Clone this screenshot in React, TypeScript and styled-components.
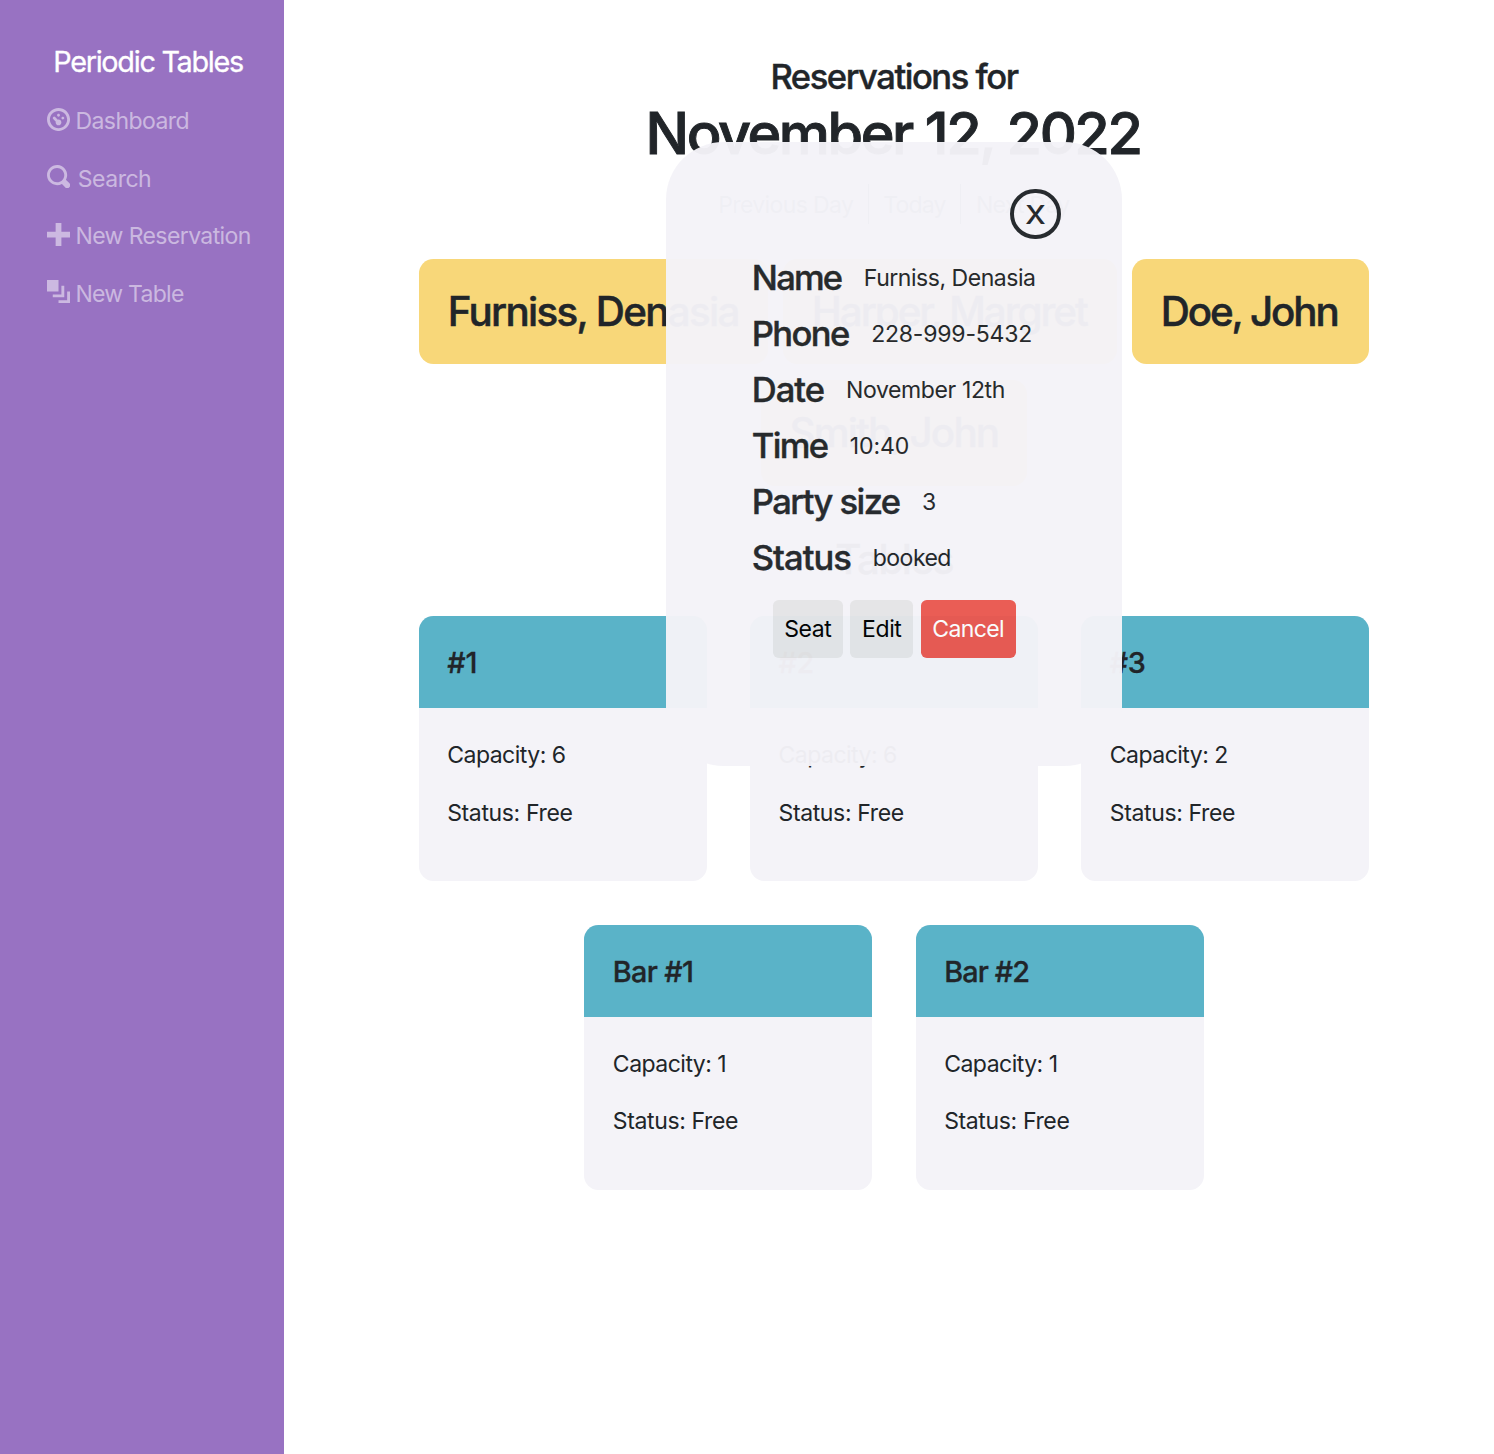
import React from "react";
import styled, { createGlobalStyle } from "styled-components";

const GlobalStyle = createGlobalStyle`
  *, *::before, *::after { box-sizing: border-box; }
  body {
    margin: 0;
    background: #fff;
    color: #212529;
    font-family: Inter, "Liberation Sans", sans-serif;
    font-size: 23.04px;
    line-height: 1.5;
    overflow: hidden;
  }
  h1, h2, h3, h4, p { margin: 0; }
`;

/* Inline text with its own tracking */
const Tracked = styled.span<{ $ls?: number }>`
  letter-spacing: ${(p) => p.$ls ?? 0}px;
  white-space: nowrap;
`;

const Shell = styled.div`
  display: flex;
  height: 1454px;
`;

const Sidebar = styled.nav`
  flex: 0 0 284px;
  padding: 40px 0 0 46.4px;
  background: #9872c2;
`;

const Brand = styled.div`
  padding-left: 6.8px;
  height: 52.4px;
  font-size: 28.8px;
  line-height: 43px;
  color: #fff;
  -webkit-text-stroke: 0.3px;
`;

const NavLink = styled.a`
  display: flex;
  align-items: center;
  height: 57.6px;
  color: rgba(255, 255, 255, 0.5);
`;

const NavIcon = styled.svg`
  width: 23.04px;
  height: 23.04px;
  margin: -4px -0.4px 0 0.4px;
  fill: currentColor;
`;

const NavText = styled(Tracked)<{ $gap: number }>`
  margin-left: ${(p) => p.$gap}px;
`;

const Main = styled.main`
  flex: 1;
  display: flex;
  flex-direction: column;
  align-items: center;
  padding: 56px 0 0 10px;
`;

const Title = styled.h2`
  font-size: 34.56px;
  font-weight: 500;
  line-height: 42px;
  -webkit-text-stroke: 0.4px;
`;

const DateTitle = styled.h1`
  padding-right: 2px;
  font-size: 57.6px;
  font-weight: 500;
  line-height: 70px;
  -webkit-text-stroke: 0.9px;
`;

const DayNav = styled.div`
  display: flex;
  height: 40px;
  margin: 16px 0 35px;
  line-height: 43px;
  color: #6c757d;
`;

const DayButton = styled.a<{ $w: number }>`
  width: ${(p) => p.$w}px;
  text-align: center;
  & + & { border-left: 1.44px solid #6c757d; }
`;

const Reservations = styled.section`
  display: flex;
  flex-wrap: wrap;
  justify-content: center;
  gap: 16px 15px;
  width: 980px;
`;

const Reservation = styled.div<{ $w: number }>`
  width: ${(p) => p.$w}px;
  height: 105.4px;
  padding-left: 28.5px;
  border-radius: 14.4px;
  background: #f8d779;
  font-size: 40.32px;
  font-weight: 500;
  line-height: 106.6px;
  -webkit-text-stroke: 0.5px;
`;

const SectionTitle = styled.h3`
  margin: 50.5px 0 32px;
  font-size: 40.32px;
  font-weight: 500;
  line-height: 48px;
  -webkit-text-stroke: 0.5px;
`;

const Tables = styled.section`
  display: flex;
  flex-wrap: wrap;
  justify-content: center;
  gap: 43.3px;
  width: 1000px;
`;

const TableCard = styled.article`
  width: 288px;
  height: 265px;
  border-radius: 14.4px;
  background: #f4f3f8;
  overflow: hidden;
`;

const TableHead = styled.h4`
  height: 92px;
  padding-left: 28.5px;
  background: #5ab3c8;
  font-size: 28.8px;
  font-weight: 500;
  line-height: 93px;
  -webkit-text-stroke: 0.3px;
`;

const TableBody = styled.div`
  display: flex;
  flex-direction: column;
  gap: 23px;
  padding: 30px 28.5px;
`;

const Dialog = styled.div`
  position: absolute;
  top: 142px;
  left: 666px;
  width: 456px;
  height: 623.6px;
  padding: 46.5px 61px 0 85.8px;
  border-radius: 57.6px;
  background: #f4f3f8;
  opacity: 0.97;
`;

const CloseButton = styled.button`
  display: flex;
  align-items: center;
  justify-content: center;
  width: 50.6px;
  height: 50.6px;
  margin-left: auto;
  padding: 0 0 5px;
  border: 4.3px solid #212529;
  border-radius: 50%;
  background: transparent;
  color: #212529;
  font: 400 35px/36px Inter, "Liberation Sans", sans-serif;
`;

const CloseGlyph = styled.span`
  transform: scaleX(1.12);
`;

const Field = styled.div<{ $gap: number }>`
  display: flex;
  align-items: baseline;
  gap: ${(p) => p.$gap}px;
  height: 56px;
`;

const Details = styled.div`
  padding-top: 18px;
`;

const Label = styled(Tracked)`
  font-size: 34.56px;
  font-weight: 500;
  line-height: 42px;
  -webkit-text-stroke: 0.4px;
`;

const Value = styled(Tracked)`
  position: relative;
  top: -4px;
`;

const Actions = styled.div`
  display: flex;
  gap: 7.2px;
  margin: 7px 0 0 21px;
`;

const Action = styled.button<{ $w: number; $danger?: boolean }>`
  width: ${(p) => p.$w}px;
  height: 57.6px;
  padding: 0;
  border: 0;
  border-radius: 5.76px;
  background: ${(p) => (p.$danger ? "#ea5850" : "#e5e5e7")};
  color: ${(p) => (p.$danger ? "#fff" : "#000")};
  font: 400 23.04px/59px Inter, "Liberation Sans", sans-serif;
`;

const links = [
  { text: "Dashboard", ls: -0.57, gap: 6, d: "M4 0c-2.2 0-4 1.8-4 4s1.8 4 4 4 4-1.8 4-4-1.8-4-4-4zm0 1c1.66 0 3 1.34 3 3s-1.34 3-3 3-3-1.34-3-3 1.34-3 3-3zm0 1c-.28 0-.5.22-.5.5s.22.5.5.5.5-.22.5-.5-.22-.5-.5-.5zm-1.66 1a.5.5 0 0 0-.19.84l.91.91c-.02.08-.06.16-.06.25 0 .55.45 1 1 1s1-.45 1-1-.45-1-1-1c-.09 0-.17.04-.25.06l-.91-.91a.5.5 0 0 0-.44-.16.5.5 0 0 0-.06 0zm3.16 0c-.28 0-.5.22-.5.5s.22.5.5.5.5-.22.5-.5-.22-.5-.5-.5z" },
  { text: "Search", ls: -0.5, gap: 8.4, d: "M3.5 0c-1.93 0-3.5 1.57-3.5 3.5s1.57 3.5 3.5 3.5c.59 0 1.17-.14 1.66-.41a1 1 0 0 0 .13.13l1 1a1.02 1.02 0 1 0 1.44-1.44l-1-1a1 1 0 0 0-.16-.13c.27-.49.44-1.06.44-1.66 0-1.93-1.55-3.5-3.5-3.5zm0 1c1.39 0 2.5 1.11 2.5 2.5 0 .66-.24 1.27-.66 1.72l-.03.03a1 1 0 0 0-.13.13c-.44.4-1.04.63-1.69.63-1.39 0-2.5-1.11-2.5-2.5s1.11-2.5 2.5-2.5z" },
  { text: "New Reservation", ls: -0.61, gap: 6, d: "M3 0v3h-3v2h3v3h2v-3h3v-2h-3v-3h-2z" },
  { text: "New Table", ls: -0.75, gap: 6, d: "M0 0v4h4v-4h-4zm5 2v3h-3v1h4v-4h-1zm2 2v3h-3v1h4v-4h-1z" },
];

const reservations = [
  { name: "Furniss, Denasia", w: 349, ls: -1.68 },
  { name: "Harper, Margret", w: 334, ls: -2 },
  { name: "Doe, John", w: 236.5, ls: -2.1 },
  { name: "Smith, John", w: 266, ls: -1.8 },
];

const tables = [
  { name: "#1", capacity: 6, ls: 0 },
  { name: "#2", capacity: 6, ls: -0.4 },
  { name: "#3", capacity: 2, ls: -0.4 },
  { name: "Bar #1", capacity: 1, ls: -0.65 },
  { name: "Bar #2", capacity: 1, ls: -0.85 },
];

const fields = [
  { label: "Name", value: "Furniss, Denasia", gap: 22.5, ls: -1.8, vls: -0.48 },
  { label: "Phone", value: "228-999-5432", gap: 22.5, ls: -1.6, vls: -0.22 },
  { label: "Date", value: "November 12th", gap: 22, ls: -1, vls: -0.4 },
  { label: "Time", value: "10:40", gap: 22.5, ls: -1.7, vls: -0.1 },
  { label: "Party size", value: "3", gap: 22.5, ls: -1.57, vls: -0.4 },
  { label: "Status", value: "booked", gap: 22, ls: -1, vls: -0.55 },
];

export default function App() {
  return (
    <>
      <GlobalStyle />
      <Shell>
        <Sidebar>
          <Brand><Tracked $ls={-1.28}>Periodic Tables</Tracked></Brand>
          {links.map((l) => (
            <NavLink key={l.text}>
              <NavIcon viewBox="0 0 8 8"><path d={l.d} /></NavIcon>
              <NavText $gap={l.gap} $ls={l.ls}>{l.text}</NavText>
            </NavLink>
          ))}
        </Sidebar>
        <Main>
          <Title><Tracked $ls={-1.46}>Reservations for</Tracked></Title>
          <DateTitle><Tracked $ls={-2.45}>November 12, 2022</Tracked></DateTitle>
          <DayNav>
            <DayButton $w={164}><Tracked $ls={-0.65}>Previous Day</Tracked></DayButton>
            <DayButton $w={92.5}><Tracked $ls={-0.8}>Today</Tracked></DayButton>
            <DayButton $w={124}><Tracked $ls={-0.75}>Next Day</Tracked></DayButton>
          </DayNav>
          <Reservations>
            {reservations.map((r) => (
              <Reservation key={r.name} $w={r.w}><Tracked $ls={r.ls}>{r.name}</Tracked></Reservation>
            ))}
          </Reservations>
          <SectionTitle><Tracked $ls={-1.5}>Tables</Tracked></SectionTitle>
          <Tables>
            {tables.map((t) => (
              <TableCard key={t.name}>
                <TableHead><Tracked $ls={t.ls}>{t.name}</Tracked></TableHead>
                <TableBody>
                  <p><Tracked $ls={-0.53}>Capacity: {t.capacity}</Tracked></p>
                  <p><Tracked $ls={-0.38}>Status: Free</Tracked></p>
                </TableBody>
              </TableCard>
            ))}
          </Tables>
        </Main>
      </Shell>
      <Dialog role="dialog">
        <CloseButton><CloseGlyph>x</CloseGlyph></CloseButton>
        <Details>
          {fields.map((f) => (
            <Field key={f.label} $gap={f.gap}>
              <Label $ls={f.ls}>{f.label}</Label>
              <Value $ls={f.vls}>{f.value}</Value>
            </Field>
          ))}
        </Details>
        <Actions>
          <Action $w={70}><Tracked $ls={-0.5}>Seat</Tracked></Action>
          <Action $w={63.5}><Tracked $ls={-0.4}>Edit</Tracked></Action>
          <Action $w={95} $danger><Tracked $ls={-0.65}>Cancel</Tracked></Action>
        </Actions>
      </Dialog>
    </>
  );
}
